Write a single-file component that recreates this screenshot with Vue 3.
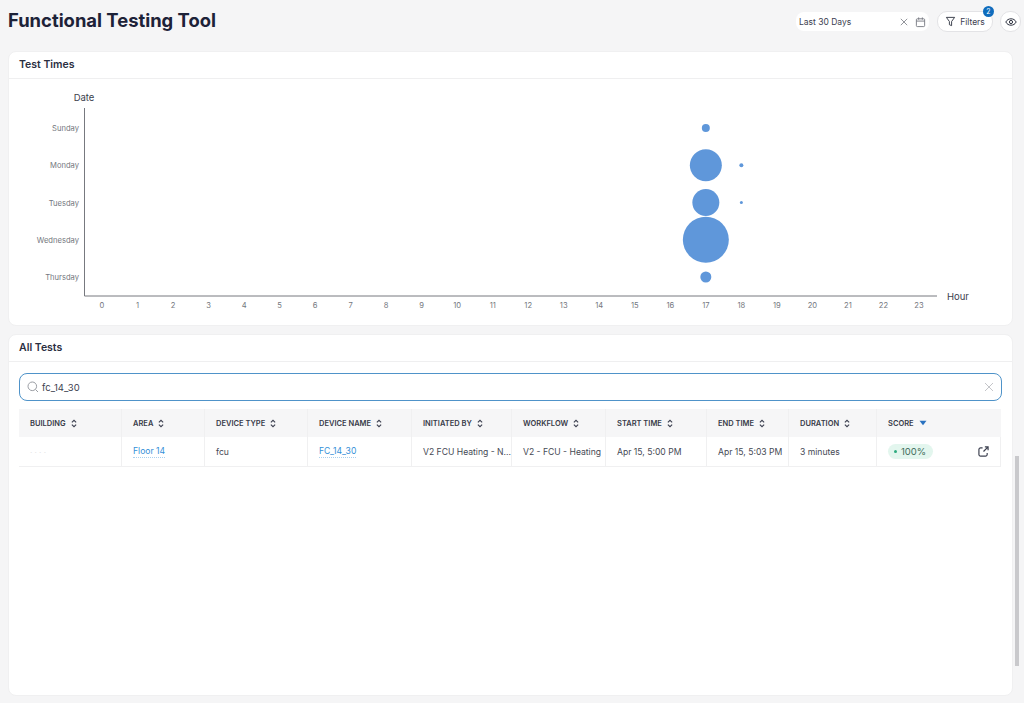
<template>
  <div class="page">
    <div class="top">
      <h1>Functional Testing Tool</h1>
      <div class="top-tools">
        <div class="date-box">
          <span class="date-text">Last 30 Days</span>
          <svg class="date-x" width="10" height="10" viewBox="0 0 10 10"><path d="M1 1l8 8M9 1l-8 8" /></svg>
          <svg class="date-cal" width="11" height="12" viewBox="0 0 12 12"><rect x="1.500" y="2.500" width="9" height="8.500" rx="1" /><path d="M1.500 5h9M4 1v2.500M8 1v2.500" /></svg>
        </div>
        <button class="filter-btn">
          <svg width="11" height="11" viewBox="0 0 12 12"><path d="M1.500 1.500h9L7.200 6v4.500L4.800 9.500V6z" /></svg>
          <span>Filters</span>
          <i class="badge">2</i>
        </button>
        <button class="eye-btn">
          <svg width="12" height="12" viewBox="0 0 12 12"><path d="M.8 6C2 3.800 3.800 2.800 6 2.800s4 1 5.200 3.200C10 8.200 8.200 9.200 6 9.200S2 8.200.8 6z" /><circle cx="6" cy="6" r="1.600" /></svg>
        </button>
      </div>
    </div>

    <section class="card chart-card">
      <h2>Test Times</h2>
      <svg class="chart" width="1005" height="247" viewBox="8 79 1005 247">
        <text x="84" y="100.500" class="axis-title" text-anchor="middle">Date</text>
        <text x="947" y="299.500" class="axis-title">Hour</text>
        <path class="axis" d="M84.500 108V296H937" />
        <text v-for="(d, i) in days" :key="d" x="79" :y="dayY(i) + 3" class="tick" text-anchor="end">{{ d }}</text>
        <text v-for="h in 24" :key="h" :x="hourX(h - 1)" y="308" class="tick" text-anchor="middle">{{ h - 1 }}</text>
        <circle v-for="b in bubbles" :key="b.hour + '-' + b.day" :cx="hourX(b.hour)" :cy="dayY(b.day)" :r="b.r" class="bubble" />
      </svg>
    </section>

    <section class="card tests-card">
      <h2>All Tests</h2>
      <div class="tests-body">
        <div class="search">
          <svg width="12" height="12" viewBox="0 0 12 12"><circle cx="5.300" cy="5.300" r="4.300" /><path d="M8.500 8.500l2.500 2.500" /></svg>
          <span class="search-text">fc_14_30</span>
          <svg class="search-x" width="10" height="10" viewBox="0 0 10 10"><path d="M1 1l8 8M9 1l-8 8" /></svg>
        </div>
        <div class="table">
          <div class="row head">
            <div v-for="c in columns" :key="c.label" class="cell" :style="{ width: c.width + 'px' }">
              <span>{{ c.label }}</span>
              <svg v-if="c.label !== 'SCORE'" width="6" height="9" viewBox="0 0 7 10"><path d="M1 3.600L3.500 1.200 6 3.600M1 6.400l2.500 2.400L6 6.400" /></svg>
              <svg v-else class="sort-down" width="8" height="6" viewBox="0 0 8 6"><path d="M.5.800h7L4 5.200z" /></svg>
            </div>
          </div>
          <div class="row body">
            <div class="cell" style="width: 103px"><span class="hidden-name">· · · ·</span></div>
            <div class="cell" style="width: 83px"><a>Floor 14</a></div>
            <div class="cell" style="width: 103px">fcu</div>
            <div class="cell" style="width: 104px"><a>FC_14_30</a></div>
            <div class="cell" style="width: 100px">V2 FCU Heating - N...</div>
            <div class="cell" style="width: 94px">V2 - FCU - Heating</div>
            <div class="cell" style="width: 101px">Apr 15, 5:00 PM</div>
            <div class="cell" style="width: 82px">Apr 15, 5:03 PM</div>
            <div class="cell" style="width: 88px">3 minutes</div>
            <div class="cell score-cell" style="width: 124px">
              <span class="score"><i></i>100%</span>
              <svg class="open-icon" width="11" height="11" viewBox="0 0 12 12"><path d="M5 2H2.800A1.800 1.800 0 0 0 1 3.800v5.400A1.800 1.800 0 0 0 2.800 11h5.400A1.800 1.800 0 0 0 10 9.200V7.500M6 6l5-5M7.500 1H11v3.500" /></svg>
            </div>
          </div>
        </div>
      </div>
    </section>

    <div class="scroll-thumb"></div>
  </div>
</template>

<script setup>
const days = ["Sunday", "Monday", "Tuesday", "Wednesday", "Thursday"];

const bubbles = [
  { hour: 17, day: 0, r: 4 },
  { hour: 17, day: 1, r: 16 },
  { hour: 17, day: 2, r: 13.5 },
  { hour: 17, day: 3, r: 23 },
  { hour: 17, day: 4, r: 5.5 },
  { hour: 18, day: 1, r: 2 },
  { hour: 18, day: 2, r: 1.5 },
];

const columns = [
  { label: "BUILDING", width: 103 },
  { label: "AREA", width: 83 },
  { label: "DEVICE TYPE", width: 103 },
  { label: "DEVICE NAME", width: 104 },
  { label: "INITIATED BY", width: 100 },
  { label: "WORKFLOW", width: 94 },
  { label: "START TIME", width: 101 },
  { label: "END TIME", width: 82 },
  { label: "DURATION", width: 88 },
  { label: "SCORE", width: 124 },
];

function hourX(h) {
  return 102 + h * 35.52;
}

function dayY(d) {
  return 128 + d * 37.25;
}
</script>

<style>
body {
  background: #f5f5f6;
}
</style>

<style scoped>
.page {
  position: relative;
  width: 1024px;
  height: 703px;
  overflow: hidden;
  background: #f5f5f6;
  font-family: Inter, "Noto Sans", sans-serif;
  color: #2f3341;
}

.top {
  display: flex;
  justify-content: space-between;
  align-items: flex-start;
  height: 51px;
  padding: 0 3px 0 8px;
  box-sizing: border-box;
}

h1 {
  margin: 8px 0 0;
  font-size: 18.400px;
  line-height: 24px;
  font-weight: 700;
  color: #1d2238;
}

.top-tools {
  display: flex;
  align-items: center;
  gap: 8px;
  margin-top: 11px;
}

.date-box {
  display: flex;
  align-items: center;
  width: 133px;
  height: 19px;
  padding: 0 3px 0 3px;
  box-sizing: border-box;
  background: #fff;
  border-radius: 8px;
}

.date-text {
  flex: 1;
  font-size: 8.500px;
  color: #3d4150;
}

.date-box svg,
.filter-btn svg,
.eye-btn svg,
.search svg,
.open-icon {
  fill: none;
  stroke: #777a82;
  stroke-width: 1;
}

.date-box .date-x {
  width: 8px;
  height: 8px;
  margin-right: 7px;
}

.filter-btn,
.eye-btn {
  display: flex;
  align-items: center;
  justify-content: center;
  height: 21px;
  padding: 0;
  background: #fff;
  border: 1px solid #e3e3e6;
  border-radius: 10px;
  font-family: inherit;
  color: #3d4150;
}

.filter-btn {
  position: relative;
  gap: 4px;
  width: 56px;
  font-size: 8.500px;
}

.filter-btn svg {
  stroke: #2f3341;
}

.badge {
  position: absolute;
  top: -6px;
  right: -2px;
  width: 11px;
  height: 11px;
  border-radius: 50%;
  background: #0f6cbd;
  color: #fff;
  font-style: normal;
  font-size: 7px;
  line-height: 11px;
  text-align: center;
}

.eye-btn {
  width: 21px;
  margin-left: -1px;
}

.eye-btn svg {
  stroke: #2f3341;
}

.card {
  margin: 0 11px 0 8px;
  background: #fff;
  border-radius: 8px;
  border: 1px solid #f0f0f1;
  box-sizing: border-box;
}

.card h2 {
  height: 27px;
  margin: 0;
  padding: 0 10px;
  box-sizing: border-box;
  border-bottom: 1px solid #efeff0;
  font-size: 10.500px;
  line-height: 25px;
  font-weight: 600;
  color: #2a2e3f;
}

.chart-card {
  height: 275px;
  margin-bottom: 8px;
}

.chart {
  display: block;
  margin: 0 0 0 -1px;
}

.axis {
  fill: none;
  stroke: #77797f;
  stroke-width: 1;
}

.axis-title {
  font-size: 9.500px;
  fill: #3a3e4c;
}

.tick {
  font-size: 7.600px;
  fill: #74777e;
}

.bubble {
  fill: #5f97da;
}

.tests-card {
  height: 362px;
}

.tests-body {
  padding: 11px 10px 0;
}

.search {
  display: flex;
  align-items: center;
  gap: 3px;
  height: 28px;
  padding: 0 6px 0 7px;
  border: 1px solid #4f93c9;
  border-radius: 8px;
  box-sizing: border-box;
}

.search svg {
  stroke: #9a9da3;
}

.search-text {
  flex: 1;
  font-size: 9.500px;
  color: #3d4150;
}

.search .search-x {
  stroke: #c4c5c9;
  margin-right: 1px;
}

.table {
  margin-top: 8px;
  width: 982px;
}

.row {
  display: flex;
}

.cell {
  display: flex;
  align-items: center;
  gap: 5px;
  flex: none;
  padding-left: 11px;
  box-sizing: border-box;
  border-right: 1px solid #f0f0f1;
  white-space: nowrap;
  overflow: hidden;
}

.cell:last-child {
  border-right: 0;
}

.head {
  height: 28px;
  background: #f6f6f7;
  font-size: 7.500px;
  font-weight: 600;
  color: #363a47;
}

.head svg {
  flex: none;
  fill: none;
  stroke: #3d4150;
  stroke-width: 1.300;
}

.head .sort-down {
  fill: #2a72c0;
  stroke: none;
}

.body {
  height: 29px;
  border-bottom: 1px solid #f0f0f1;
  border-right: 1px solid #f0f0f1;
  font-size: 8.600px;
  color: #454954;
}

.hidden-name {
  color: #e2e2e4;
  font-size: 8px;
}

.body a {
  color: #3590d8;
  border-bottom: 1px dotted #a9d0ee;
  line-height: 11px;
}

.score-cell {
  justify-content: space-between;
  padding-right: 12px;
}

.score {
  display: flex;
  align-items: center;
  gap: 4px;
  height: 15px;
  padding: 0 7px 0 6px;
  border-radius: 8px;
  background: #e3f6ee;
  color: #3f6d5c;
  font-size: 9.500px;
}

.score i {
  width: 3px;
  height: 3px;
  border-radius: 50%;
  background: #2dab7f;
}

.score-cell .open-icon {
  stroke: #3d4150;
  stroke-width: 1.300;
}

.scroll-thumb {
  position: absolute;
  top: 456px;
  left: 1015px;
  width: 4px;
  height: 210px;
  background: #c9c9cc;
}
</style>
